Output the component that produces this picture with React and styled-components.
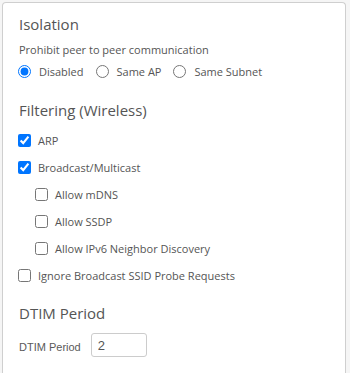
import React from "react";
import styled, { createGlobalStyle } from "styled-components";

const Global = createGlobalStyle`
  html, body { margin: 0; padding: 0; }
  body {
    background: #f5f5f5;
    font-family: "Open Sans", "Liberation Sans", sans-serif;
    width: 350px;
    height: 373px;
    overflow: hidden;
  }
`;

const Page = styled.div`
  padding: 2px 4px 0 2px;
`;

const Panel = styled.div`
  background: #fff;
  border: 1px solid #cfcfcf;
  border-bottom: none;
  border-radius: 4px 4px 0 0;
  height: 380px;
  padding: 11px 15px 0 15px;
  box-sizing: border-box;
`;

const Heading = styled.div`
  font-size: 15px;
  line-height: 20px;
  color: #555;
  margin: ${(p) => p.$mt || 0}px 0 0 1px;
`;

const Text = styled.div`
  font-size: 11px;
  line-height: 16px;
  color: #555;
  margin: 8px 0 0 1px;
`;

const RadioGroup = styled.div`
  display: flex;
  align-items: center;
  gap: 12px;
  margin-top: 6px;
`;

const Option = styled.label`
  display: flex;
  align-items: center;
  gap: 8px;
  font-size: 11px;
  line-height: 16px;
  color: #555;
`;

const Radio = styled.input.attrs({ type: "radio" })`
  width: 13px;
  height: 13px;
  margin: 0 0 2px 0;
`;

const List = styled.div`
  display: flex;
  flex-direction: column;
  gap: 11px;
  margin-top: 13px;
`;

const Check = styled.label`
  display: flex;
  align-items: center;
  gap: 7px;
  height: 16px;
  padding-left: ${(p) => (p.$nested ? 17 : 0)}px;
  font-size: 11px;
  line-height: 16px;
  color: #555;
`;

const Box = styled.input.attrs({ type: "checkbox" })`
  width: 13px;
  height: 13px;
  margin: 0 0 1px 0;
`;

const FieldRow = styled.div`
  display: flex;
  align-items: center;
  gap: 10px;
  margin: 10px 0 0 1px;
`;

const FieldLabel = styled.span`
  font-family: "Liberation Sans", Arial, sans-serif;
  font-size: 11px;
  line-height: 12px;
  color: #5a5a5a;
  padding-top: 3px;
`;

const NumInput = styled.input`
  width: 56px;
  height: 24px;
  box-sizing: border-box;
  border: 1px solid #ccc;
  border-radius: 3px;
  padding: 0 6px;
  font-family: "Liberation Sans", Arial, sans-serif;
  font-size: 13px;
  color: #555;
  outline: none;
`;

export default function App() {
  return (
    <>
      <Global />
      <Page>
        <Panel>
          <Heading>Isolation</Heading>
          <Text>Prohibit peer to peer communication</Text>
          <RadioGroup>
            <Option>
              <Radio name="iso" defaultChecked />
              Disabled
            </Option>
            <Option>
              <Radio name="iso" />
              Same AP
            </Option>
            <Option>
              <Radio name="iso" />
              Same Subnet
            </Option>
          </RadioGroup>

          <Heading $mt={20}>Filtering (Wireless)</Heading>
          <List>
            <Check>
              <Box defaultChecked />
              ARP
            </Check>
            <Check>
              <Box defaultChecked />
              Broadcast/Multicast
            </Check>
            <Check $nested>
              <Box />
              Allow mDNS
            </Check>
            <Check $nested>
              <Box />
              Allow SSDP
            </Check>
            <Check $nested>
              <Box />
              Allow IPv6 Neighbor Discovery
            </Check>
            <Check>
              <Box />
              Ignore Broadcast SSID Probe Requests
            </Check>
          </List>

          <Heading $mt={19}>DTIM Period</Heading>
          <FieldRow>
            <FieldLabel>DTIM Period</FieldLabel>
            <NumInput defaultValue="2" />
          </FieldRow>
        </Panel>
      </Page>
    </>
  );
}
